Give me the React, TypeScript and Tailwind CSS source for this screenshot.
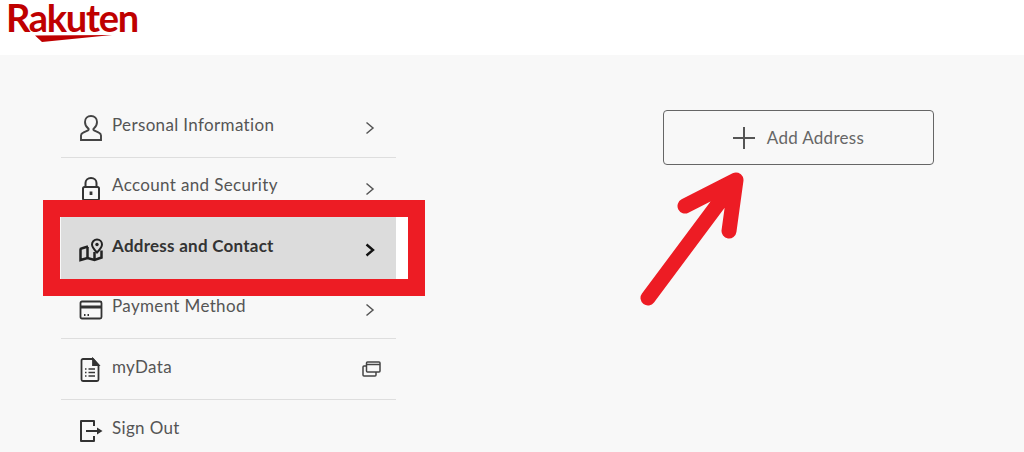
const font = { fontFamily: '"Lato", "Liberation Sans", sans-serif' };

const UserIcon = () => (
  <svg width="24" height="28" viewBox="0 0 24 28" fill="none" stroke="#444" strokeWidth="1.9">
    <path d="M12 2c-3.600 0-6 2.500-6 6 0 3 1.200 5 3.200 6.400.7.500.6 1.500-.2 1.900l-4.800 2.300C2.600 19.300 2 20.400 2 21.600V26h20v-4.400c0-1.200-.6-2.300-2.200-3l-4.800-2.300c-.8-.4-.9-1.400-.2-1.900C16.800 13 18 11 18 8c0-3.500-2.400-6-6-6z" />
  </svg>
);

const LockIcon = () => (
  <svg width="24" height="28" viewBox="0 0 24 28" fill="none" stroke="#333" strokeWidth="2">
    <path d="M6.500 12V8C6.500 5 8.800 3 12 3s5.500 2 5.500 5v4" />
    <rect x="4" y="12" width="16" height="13" rx="1.500" />
    <path d="M12 16.500v3.500" strokeWidth="2.800" />
  </svg>
);

const MapIcon = () => (
  <svg width="24" height="24" viewBox="0 0 24 24" fill="none" stroke="#222" strokeWidth="2.500">
    <path d="M9 8.500 2.500 10.500a1 1 0 0 0-1 1V22l7-2 7 2 7-2.500v-7" />
    <path d="M8.500 9v11M15.500 14v8" />
    <path d="M18 1.500a5 5 0 0 0-5 5c0 3 5 8 5 8s5-5 5-8a5 5 0 0 0-5-5z" fill="#dcdcdc" strokeWidth="2" />
    <circle cx="18" cy="6.500" r="1.700" fill="#222" stroke="none" />
  </svg>
);

const CardIcon = () => (
  <svg width="24" height="20" viewBox="0 0 24 20" fill="none" stroke="#333" strokeWidth="1.800">
    <rect x="1.500" y="1.500" width="21" height="17" rx="1.500" />
    <path d="M1.500 7h21" strokeWidth="3" />
    <path d="M5 15h1.500M8.500 15H10" strokeWidth="1.800" />
  </svg>
);

const DocIcon = () => (
  <svg width="22" height="26" viewBox="0 0 22 26" fill="none" stroke="#333" strokeWidth="1.800">
    <path d="M14 2H4a1.500 1.500 0 0 0-1.500 1.500v19A1.500 1.500 0 0 0 4 24h14a1.500 1.500 0 0 0 1.500-1.500V8z" />
    <path d="M14 2l5.500 6H14z" fill="#333" />
    <path d="M6 12h1.500M9.500 12H16M6 15.500h1.500M9.500 15.500H16M6 19h1.500M9.500 19H16" strokeWidth="1.600" />
  </svg>
);

const SignOutIcon = () => (
  <svg width="24" height="24" viewBox="0 0 24 24" fill="none" stroke="#333" strokeWidth="2">
    <path d="M15 7V2H2v20h13v-5" strokeLinejoin="round" />
    <path d="M7 12h12" />
    <path d="M18 8.500 23.500 12 18 15.500z" fill="#333" stroke="none" />
  </svg>
);

const Chevron = ({ bold }: { bold?: boolean }) => (
  <svg width="10" height="14" viewBox="0 0 10 14" fill="none" stroke={bold ? "#111" : "#555"} strokeWidth={bold ? 2.4 : 1.5}>
    <path d="M1.500 1.500 8 7l-6.500 5.500" />
  </svg>
);

const WindowsIcon = () => (
  <svg className="-mr-[6px] -mt-[3px]" width="19" height="16" viewBox="0 0 19 16" fill="none" stroke="#444" strokeWidth="1.500">
    <rect x="4.500" y="1" width="13.500" height="10" rx="1" />
    <path d="M4.500 3.500h13.500" />
    <path d="M4.500 5H2a1 1 0 0 0-1 1v8a1 1 0 0 0 1 1h11a1 1 0 0 0 1-1v-3" />
  </svg>
);

const rows = [
  { label: "Personal Information", icon: <UserIcon />, end: <Chevron /> },
  { label: "Account and Security", icon: <LockIcon />, end: <Chevron /> },
  { label: "Address and Contact", icon: <MapIcon />, end: <Chevron bold />, active: true },
  { label: "Payment Method", icon: <CardIcon />, end: <Chevron /> },
  { label: "myData", icon: <DocIcon />, end: <WindowsIcon /> },
  { label: "Sign Out", icon: <SignOutIcon /> },
];

const App = () => {
  return (
    <div className="relative w-[1024px] h-[452px] overflow-hidden bg-[#f8f8f8]" style={font}>
      <div className="relative bg-white h-[55px] pl-[6px]">
        <div className="text-[#bf0000] text-[38px] leading-[34px] font-bold tracking-[-1.300px]">Rakuten</div>
        <svg className="absolute left-[34px] top-[33px]" width="80" height="10" viewBox="0 0 80 10">
          <path d="M1 2.500 78 2 8 9z" fill="#bf0000" />
        </svg>
      </div>

      <div className="flex pt-[42px] pl-[61px]">
        <div className="w-[335px] flex flex-col">
          {rows.map((row) => (
            <div
              key={row.label}
              className={
                row.active
                  ? "flex items-center h-[60.5px] pr-[21px] bg-[#dcdcdc] text-[#333] font-bold"
                  : "flex items-center h-[60.5px] pr-[21px] border-b border-[#dedede] last:border-b-0 text-[#555]"
              }
            >
              <div className="w-[51px] pl-[18px] pt-[3px] shrink-0 flex">{row.icon}</div>
              <div
                className={
                  row.active
                    ? "flex-1 text-[17px] leading-[20px] pb-[4px] tracking-[0.25px]"
                    : "flex-1 text-[17px] leading-[20px] pb-[4px] tracking-[0.35px]"
                }
              >
                {row.label}
              </div>
              <div className="flex items-center pt-[3px]">{row.end}</div>
            </div>
          ))}
        </div>

        <div className="ml-[267px] mt-[13px]">
          <div className="flex items-center justify-center gap-[12px] w-[271px] h-[55px] border border-[#666] rounded-[4px] text-[#666] text-[17px] tracking-[0.3px]">
            <svg width="22" height="22" viewBox="0 0 22 22" stroke="#555" strokeWidth="2">
              <path d="M11 0v22M0 11h22" />
            </svg>
            Add Address
          </div>
        </div>
      </div>

      {/* red annotation over the screenshot */}
      <div className="absolute left-[43px] top-[200px] w-[382px] h-[96px] border-[17px] border-[#ed1c24]" />
      <div className="absolute left-[396px] top-[217px] w-[12px] h-[62px] bg-white" />
      <svg className="absolute left-[635px] top-[165px]" width="120" height="145" viewBox="0 0 120 145" fill="none" stroke="#ed1c24" strokeWidth="15" strokeLinecap="round" strokeLinejoin="round">
        <path d="M13 133 98 19M50 41 101 15 94 66" />
      </svg>
    </div>
  );
};

export default App;
